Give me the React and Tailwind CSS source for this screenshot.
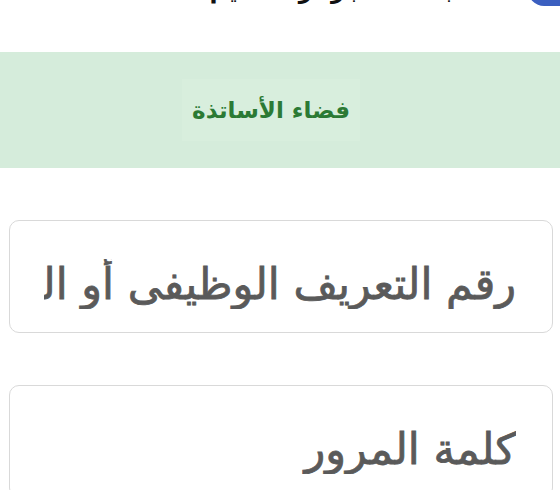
export default function App() {
  const font = { fontFamily: '"DejaVu Sans", "Noto Sans", sans-serif' };
  return (
    <div dir="rtl" className="w-[560px] h-[490px] overflow-hidden bg-white" style={font}>
      <div className="h-[52px] overflow-hidden">
        <div className="flex items-center justify-start gap-[56px] -mt-[26px]">
          <div className="w-[46px] h-[32px] rounded-full bg-[#3b5fc0] translate-x-[14px]"></div>
          <div className="text-[24px] font-bold text-[#111] leading-[32px]">
            جامعة الجزائر للتعليم
          </div>
        </div>
      </div>
      <div className="h-[116px] bg-[#d5ecdb] flex items-center justify-center">
        <span className="mr-[18px] px-[10px] py-[14px] bg-[#d8eedd] text-[#2b7a34] text-[23px] font-bold">
          فضاء الأساتذة
        </span>
      </div>
      <div className="flex flex-col gap-[52px] pt-[52px] pl-[9px] pr-[7px]">
        <input
          dir="rtl"
          className="block w-full h-[113px] rounded-[10px] border border-[#d9d9d9] bg-white pl-[34px] pr-[36px] pt-[14px] text-[43px] text-[#555] placeholder:text-[#5a5a5a] placeholder:[-webkit-text-stroke:0.8px_#5a5a5a] outline-none"
          style={font}
          placeholder="رقم التعريف الوظيفى أو البريد الإلكتروني"
        />
        <input
          dir="rtl"
          type="password"
          className="block w-full h-[113px] rounded-[10px] border border-[#d9d9d9] bg-white pl-[34px] pr-[36px] pt-[14px] text-[43px] text-[#555] placeholder:text-[#5a5a5a] placeholder:[-webkit-text-stroke:0.8px_#5a5a5a] outline-none"
          style={font}
          placeholder="كلمة المرور"
        />
      </div>
    </div>
  );
}
